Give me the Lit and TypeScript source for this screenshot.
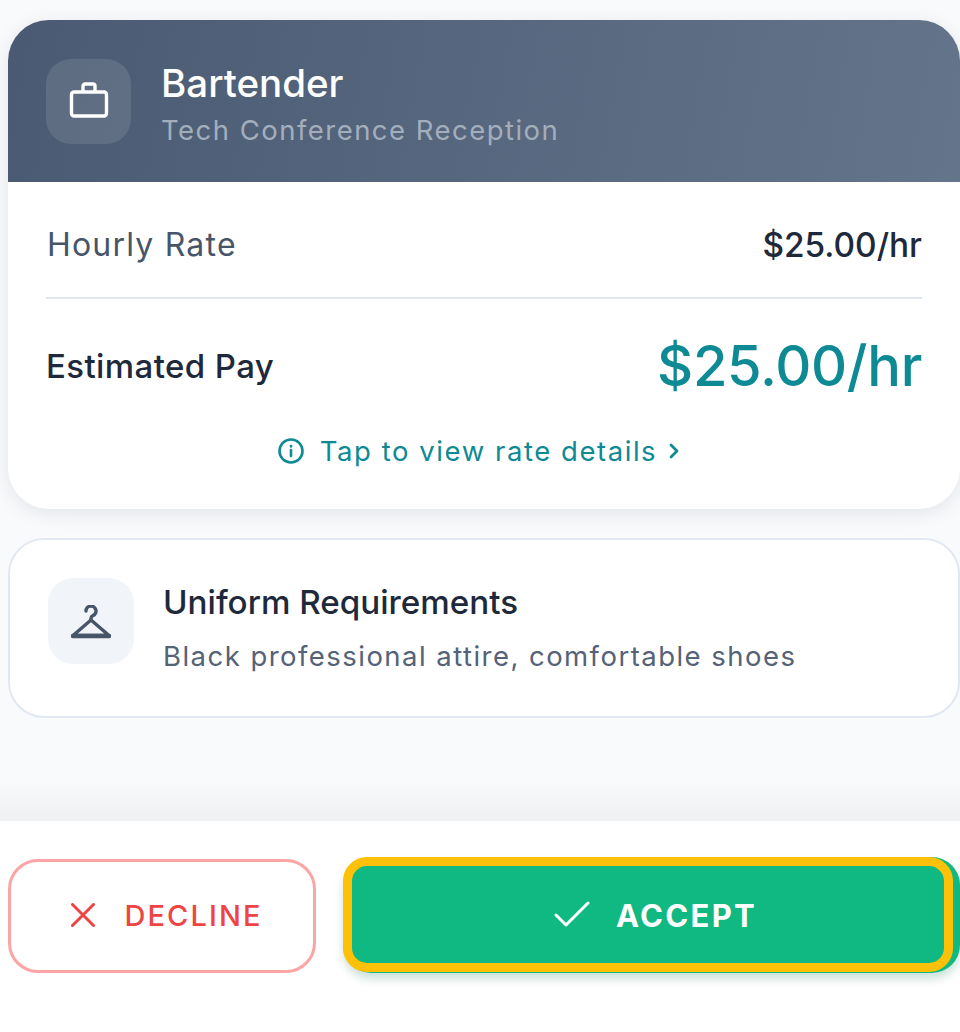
import { LitElement, html, css } from "lit";
import { customElement } from "lit/decorators.js";

@customElement("app-root")
export class AppRoot extends LitElement {
  static styles = css`
    :host { display: block; width: 960px; height: 1032px; overflow: hidden; background: #fff; font-family: Inter, "Noto Sans", sans-serif; }
    * { box-sizing: border-box; }
    .page { display: flex; flex-direction: column; height: 1032px; }
    .scroll { height: 821px; flex: none; background: linear-gradient(180deg, #f8fafc 0, #f8fafc 780px, #eff0f2 821px); padding: 20px 0 0 8px; display: flex; flex-direction: column; gap: 29px; }
    .card { height: 489px; flex: none; background: #fff; border-radius: 41px; overflow: hidden; box-shadow: 0 4px 20px rgba(15,23,42,.09); display: flex; flex-direction: column; }
    .head { height: 162px; flex: none; background: linear-gradient(100deg, #4a5a72, #64748b); display: flex; align-items: center; gap: 30px; padding: 0 0 0 38px; }
    .ibox { width: 85px; height: 85px; border-radius: 25px; background: rgba(255,255,255,.11); display: flex; align-items: center; justify-content: center; flex: none; }
    .ibox svg { display: block; }
    .htext { display: flex; flex-direction: column; gap: 8px; margin-top: 4px; }
    .title { font-size: 38.5px; font-weight: 500; line-height: 46px; color: #fff; }
    .sub { font-size: 27.5px; line-height: 33px; letter-spacing: 1.47px; color: #a3aebd; }
    .body { flex: 1; padding: 0 38px; display: flex; flex-direction: column; }
    .row { display: flex; justify-content: space-between; align-items: center; }
    .r1 { height: 117px; border-bottom: 2px solid #e2e8f0; padding-top: 10px; }
    .lab { font-size: 32px; letter-spacing: 1.2px; color: #475569; margin-left: 1px; }
    .val { font-size: 33.4px; font-weight: 500; color: #1e293b; }
    .r2 { height: 133px; }
    .lab2 { font-size: 33px; font-weight: 500; color: #1e293b; letter-spacing: .4px; }
    .big { font-size: 56px; font-weight: 500; color: #0d8a94; letter-spacing: -.3px; }
    .tap { display: flex; align-items: center; justify-content: center; gap: 16px; color: #0d8a94; font-size: 27.5px; letter-spacing: 1.55px; height: 34px; margin-top: 2px; padding-right: 10px; }
    .chev { margin-left: -5px; }
    .uni { height: 180px; flex: none; border: 2px solid #e2e8f0; border-radius: 36px; background: #fff; display: flex; align-items: flex-start; gap: 29px; padding: 38px 0 0 38px; }
    .ibox2 { width: 86px; height: 86px; border-radius: 25px; background: #f1f5f9; display: flex; align-items: center; justify-content: center; flex: none; padding-top: 1px; }
    .ut { font-size: 33.2px; font-weight: 500; color: #1e293b; line-height: 42px; margin-top: 3px; }
    .us { font-size: 27.5px; letter-spacing: 1.46px; color: #556277; line-height: 34px; margin-top: 16px; }
    .bar { flex: 1; background: #fff; display: flex; padding: 36px 0 0 8px; gap: 27px; align-items: flex-start; }
    .btn { display: flex; align-items: center; justify-content: center; font-weight: 600; font-size: 30.3px; }
    .dec { width: 308px; height: 114px; margin-top: 2px; border: 3px solid #fca5a5; border-radius: 30px; color: #ef4444; gap: 29px; font-weight: 500; background: #fff; font-size: 29px; letter-spacing: 2.1px; padding: 0 0 2px 10px; }
    .acc { position: relative; flex: 1; height: 116px; background: #10b981; border-radius: 28px; color: #fff; gap: 26px; font-size: 31px; font-weight: 700; letter-spacing: 2.3px; box-shadow: 0 6px 10px rgba(16,120,90,.22); padding: 0 0 0 8px; }
    .acc::after { content: ""; position: absolute; left: 0; top: 0; right: 7px; bottom: 1px; border: 9.5px solid #ffc107; border-radius: 24px; }
  `;
  render() {
    return html`<div class="page">
      <div class="scroll">
        <div class="card">
          <div class="head">
            <div class="ibox"><svg width="40" height="40" viewBox="0 0 40 40" fill="none" stroke="#fff" stroke-width="3.4" stroke-linejoin="round"><rect x="2.5" y="11" width="35" height="24" rx="2.5"/><path d="M14 11V5a2 2 0 0 1 2-2h8a2 2 0 0 1 2 2v6"/></svg></div>
            <div class="htext"><div class="title">Bartender</div><div class="sub">Tech Conference Reception</div></div>
          </div>
          <div class="body">
            <div class="row r1"><span class="lab">Hourly Rate</span><span class="val">$25.00/hr</span></div>
            <div class="row r2"><span class="lab2">Estimated Pay</span><span class="big">$25.00/hr</span></div>
            <div class="tap"><svg width="26" height="26" viewBox="0 0 26 26" fill="none" stroke="#0d8a94" stroke-width="2.6" stroke-linecap="round"><circle cx="13" cy="13" r="11.5"/><path d="M13 12v6M13 8v.4"/></svg><span>Tap to view rate details</span><svg class="chev" width="12" height="18" viewBox="0 0 12 18" fill="none" stroke="#0d8a94" stroke-width="2.8" stroke-linecap="round" stroke-linejoin="round"><path d="M3 3l6 6-6 6"/></svg></div>
          </div>
        </div>
        <div class="uni">
          <div class="ibox2"><svg width="40" height="34" viewBox="0 0 40 34" fill="none" stroke="#475569" stroke-width="3.4" stroke-linecap="round" stroke-linejoin="round"><path d="M15 6a5 5 0 1 1 7 4.6c-1.2.6-2 1.4-2 2.9v1"/><path d="M20 15L2 30.5h36z"/><path d="M2 31h36" stroke-width="4.4"/></svg></div>
          <div><div class="ut">Uniform Requirements</div><div class="us">Black professional attire, comfortable shoes</div></div>
        </div>
      </div>
      <div class="bar">
        <div class="btn dec"><svg width="24" height="24" viewBox="0 0 24 24" fill="none" stroke="#ef4444" stroke-width="3" stroke-linecap="round"><path d="M1.5 1.5l21 21M22.5 1.5l-21 21"/></svg><span>DECLINE</span></div>
        <div class="btn acc"><svg width="36" height="28" viewBox="0 0 36 28" fill="none" stroke="#fff" stroke-width="3" stroke-linecap="round" stroke-linejoin="round"><path d="M2 14l10 10L34 2"/></svg><span>ACCEPT</span></div>
      </div>
    </div>`;
  }
}
